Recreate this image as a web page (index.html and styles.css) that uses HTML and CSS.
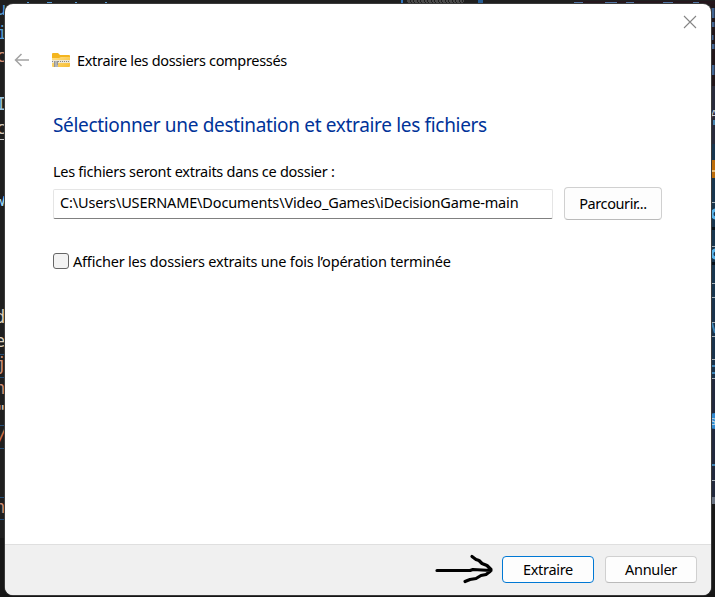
FILE: index.html
```html
<!DOCTYPE html>
<html lang="fr">
<head>
<meta charset="utf-8">
<title>Extraire les dossiers compressés</title>
<link rel="stylesheet" href="styles.css">
</head>
<body>
<svg class="desktop" width="715" height="597" aria-hidden="true">
  <rect width="715" height="597" fill="#1f1f1f"/>
  <rect y="538" width="6" height="59" fill="#171717"/>
  <rect y="594" width="715" height="3" fill="#151515"/>
  <g fill="#569cd6">
    <rect x="27" y="2" width="2" height="2"/><rect x="47" y="2" width="5" height="2"/><rect x="75" y="2" width="2" height="2"/><rect x="105" y="2" width="2" height="2"/>
    <rect x="401" width="2" height="4" fill="#3276bd"/><rect x="478" width="5" height="4" fill="#255b91"/>
  </g>
  <path d="M407 1h57M408 3h55" stroke="#777" stroke-dasharray="3 1 2 1"/>
  <rect x="574" y="1" width="141" height="3" fill="#25171d"/>
  <path d="M574 3h9M605 3h12M626 3h8M663 3h10M693 3h6" stroke="#5277a4" stroke-width="2"/>
  <g class="code">
    <text x="-4" y="15" fill="#569cd6">u</text><text x="-3" y="39" fill="#569cd6">i</text><text x="-4" y="62" fill="#ce9178">c</text>
    <text x="-4" y="110" fill="#9cc3dc">I</text><text x="-4" y="134" fill="#d4c8b9">c</text>
    <text x="-5" y="206" fill="#9cdcfe">w</text><text x="-5" y="323" fill="#ddd0bd">d</text><text x="-5" y="347" fill="#ddd0bd">e</text>
    <text x="-4" y="370" fill="#ce9178">j</text><text x="-5" y="394" fill="#ce9178">n</text><text x="-4" y="418" fill="#d4c8b9">"</text>
    <text x="-3" y="441" fill="#ce7148">/</text><text x="-5" y="513" fill="#ce9178">n</text>
  </g>
  <path d="M0 139.500h5" stroke="#ccc"/>
  <path d="M0 354.500h5M0 377.500h5M0 425.500h5M0 448.500h5M0 497.500h5M0 519.500h5" stroke="#264f78"/>
  <g>
    <rect x="710" y="4" width="5" height="82" fill="#21161a"/>
    <path d="M713 8v10M713 22v5M712 35v5M713 44v5M713 65v10" stroke="#416491" stroke-width="3"/>
    <rect x="710" y="86" width="5" height="58" fill="#292b3b"/>
    <text class="scrap" x="710" y="119">A</text><path d="M714 120v5" stroke="#4685b0" stroke-width="2"/>
    <rect x="710" y="144" width="5" height="156" fill="#18364f"/>
    <rect x="710" y="160" width="5" height="18" fill="#bc6c09"/><path d="M711 171h4" stroke="#e6bd78" stroke-width="2"/>
    <rect x="710" y="300" width="5" height="79" fill="#19334c"/>
    <rect x="710" y="379" width="5" height="118" fill="#22293d"/>
    <path d="M710 202.500h5M710 246.500h5M710 283.500h5M710 297.500h5M710 322.500h5M710 336.500h5M710 359.500h5M710 378.500h5M710 480.500h5" stroke="#a7b1b9"/>
    <path d="M710 228.500h5M710 263.500h5" stroke="#06111a" stroke-width="3"/>
    <circle cx="716" cy="214" r="4" fill="none" stroke="#58b4eb" stroke-width="3"/><circle cx="716" cy="254" r="4" fill="none" stroke="#58b4eb" stroke-width="3"/>
    <path d="M712 323l3 10M711 366h4M711 373h4M712 465h3" stroke="#3d83b5" stroke-width="2"/>
    <circle cx="715" cy="421" r="8" fill="#328bd2"/><text class="scrap" x="710" y="425">s</text>
    <rect x="710" y="497" width="5" height="7" fill="#687181"/><rect x="710" y="504" width="5" height="90" fill="#181818"/>
  </g>
</svg>

<main class="dialog">
  <div class="titlebar">
    <svg class="close" width="14" height="14" viewBox="0 0 14 14"><path d="M1 1l12 12M13 1L1 13" fill="none" stroke="#858585" stroke-width="1.100"/></svg>
  </div>
  <header class="heading">
    <svg class="back" width="16" height="14" viewBox="0 0 16 14"><path d="M15 7H1.500M7.500 1L1.500 7l6 6" fill="none" stroke="#a3a3a3" stroke-width="1.500"/></svg>
    <svg class="folder" width="18" height="15" viewBox="0 0 18 15">
      <defs><linearGradient id="gold" x2="1" y2="1"><stop stop-color="#ffe18a"/><stop offset="1" stop-color="#f7bd31"/></linearGradient></defs>
      <path d="M0 1q0-1 1-1h5l2 2h9q1 0 1 1v5H0z" fill="#f4b51e"/>
      <path d="M0 5h7l2-1h9v9q0 1-1 1H1q-1 0-1-1z" fill="url(#gold)"/>
      <path d="M0 8.500h18" stroke="#f0e7d0" stroke-width="3"/>
      <path d="M0 8.500h18" stroke="#858585" stroke-dasharray="1 1"/>
      <path d="M2 8h4v6H2z" fill="#b5b5b5"/><path d="M2.500 8v6M5.500 8v4" stroke="#959595"/>
    </svg>
    <span class="caption">Extraire les dossiers compressés</span>
  </header>
  <section class="content">
    <h1>Sélectionner une destination et extraire les fichiers</h1>
    <label class="destination-label">Les fichiers seront extraits dans ce dossier :</label>
    <div class="destination">
      <div class="path"><span>C:\Users\USERNAME\Documents\Video_Games\iDecisionGame-main</span></div>
      <button class="browse"><span>Parcourir...</span></button>
    </div>
    <div class="option"><i class="checkbox"></i><span>Afficher les dossiers extraits une fois l’opération terminée</span></div>
  </section>
  <footer>
    <svg class="arrow" width="60" height="32" viewBox="0 0 60 32"><path d="M2 17.500H35l3-1 18 1M37 3.500l4 3 3 1 3 3 5 2 4 4-1 2-4 3-5 1-5 3-6 1-5 2" fill="none" stroke="#000" stroke-width="3.200" stroke-linecap="round" stroke-linejoin="round"/></svg>
    <button class="primary"><span>Extraire</span></button>
    <button class="cancel"><span>Annuler</span></button>
  </footer>
</main>
</body>
</html>
```
FILE: styles.css
```css
* { box-sizing: border-box; }
body { margin: 0; width: 715px; height: 597px; overflow: hidden; padding: 4px 0 0 5px; background: #1f1f1f; font: 14.5px/20px "Noto Sans", sans-serif; color: #000; }
.desktop { position: absolute; left: 0; top: 0; z-index: -1; }
.code { font: 17px "DejaVu Sans Mono", monospace; }
.scrap { font: 12px "Liberation Sans", sans-serif; fill: #ccd8e1; }
.dialog { width: 706px; height: 591px; display: flex; flex-direction: column; background: #fff; border-radius: 8px; overflow: hidden; box-shadow: 0 0 0 1px #3b3b3b; }
.titlebar { height: 41px; display: flex; justify-content: flex-end; padding: 11px 14px 0 0; }
.heading { height: 30px; display: flex; align-items: center; padding-left: 9px; }
.folder { margin-left: 22px; }
.caption { margin-left: 7px; letter-spacing: -.32px; }
.content { flex: 1; padding: 36px 49px 0 48px; white-space: nowrap; }
h1 { margin: 0; font-size: 19px; line-height: 28px; font-weight: 400; letter-spacing: -.33px; color: #003399; }
.destination-label { display: block; margin-top: 22px; letter-spacing: -.28px; }
.destination { display: flex; gap: 11px; align-items: center; margin-top: 6px; height: 33px; }
.path { width: 500px; height: 30px; border: 1px solid #e5e5e5; border-bottom-color: #808080; border-radius: 2px; padding: 2px 6px; letter-spacing: -.15px; }
button { height: 27px; padding: 0; border: 1px solid #d0d0d0; border-bottom-color: #bababa; border-radius: 4px; background: #fdfdfd; color: #000; font: inherit; letter-spacing: -.3px; }
.browse { width: 98px; height: 33px; padding-bottom: 2px; letter-spacing: -.4px; }
.option { display: flex; align-items: center; gap: 4px; margin-top: 31px; height: 20px; letter-spacing: -.2px; }
.checkbox { width: 16px; height: 16px; border: 1px solid #666; border-radius: 3px; background: #f3f3f3; }
footer { height: 51px; display: flex; align-items: center; justify-content: flex-end; padding: 0 14px 2px 0; border-top: 1px solid #dfdfdf; background: #f0f0f0; }
.arrow { margin-right: 7px; }
.primary, .cancel { width: 92px; }
.primary { border-color: #0078d4; margin-right: 11px; }
```
